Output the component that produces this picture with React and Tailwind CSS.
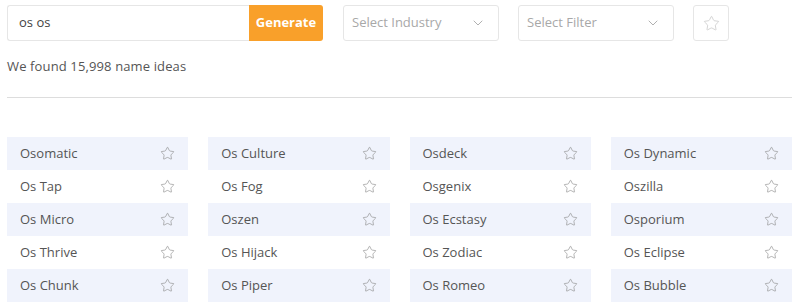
import { Star, ChevronDown } from 'lucide-react';

const names = [
  ['Osomatic', 'Os Culture', 'Osdeck', 'Os Dynamic'],
  ['Os Tap', 'Os Fog', 'Osgenix', 'Oszilla'],
  ['Os Micro', 'Oszen', 'Os Ecstasy', 'Osporium'],
  ['Os Thrive', 'Os Hijack', 'Os Zodiac', 'Os Eclipse'],
  ['Os Chunk', 'Os Piper', 'Os Romeo', 'Os Bubble'],
];

const SelectBox = ({ label }) => (
  <div className="w-[156px] h-9 flex items-center justify-between border border-[#e6e6e6] rounded-[3px] pl-[8px] pr-[12px] text-[13px] text-[#a8a8a8]">
    <span>{label}</span>
    <ChevronDown size={16} strokeWidth={1.25} className="text-[#a0a0a0]" />
  </div>
);

const App = () => {
  return (
    <div className="w-[800px] h-[304px] bg-white pl-[7px] pr-[8px] pt-[5px] overflow-hidden" style={{ fontFamily: '"Open Sans", sans-serif' }}>
      <div className="flex items-center h-9">
        <div className="flex h-9">
          <div className="w-[242px] h-9 border border-[#e6e6e6] border-r-0 rounded-l-[3px] flex items-center pl-[11px] text-[13px] text-[#444444]">
            os os
          </div>
          <button className="w-[74px] h-9 bg-[#f9a02a] rounded-r-[3px] text-white text-[13px] font-bold">
            Generate
          </button>
        </div>
        <div className="ml-5">
          <SelectBox label="Select Industry" />
        </div>
        <div className="ml-[19px]">
          <SelectBox label="Select Filter" />
        </div>
        <div className="ml-[19px] w-9 h-9 border border-[#e6e6e6] rounded-[3px] flex items-center justify-center">
          <Star size={17} strokeWidth={1} className="text-[#c4c4c4]" />
        </div>
      </div>

      <div className="mt-[16px] h-5 flex items-center text-[13px] text-[#555555] tracking-[0.01em]">
        We found 15,998 name ideas
      </div>

      <div className="mt-[20px] border-t border-[#dddddd]"></div>

      <div className="mt-[39px] grid grid-cols-4 gap-x-5">
        {names.map((row, i) =>
          row.map((name) => (
            <div
              key={name}
              className={`h-[33px] flex items-center justify-between pl-[13px] pr-[13px] text-[13px] text-[#555555] ${i % 2 === 0 ? 'bg-[#f0f3fc]' : 'bg-white'}`}
            >
              <span>{name}</span>
              <Star size={15} strokeWidth={1} className="text-[#888888]" />
            </div>
          ))
        )}
      </div>
    </div>
  );
};

export default App;
